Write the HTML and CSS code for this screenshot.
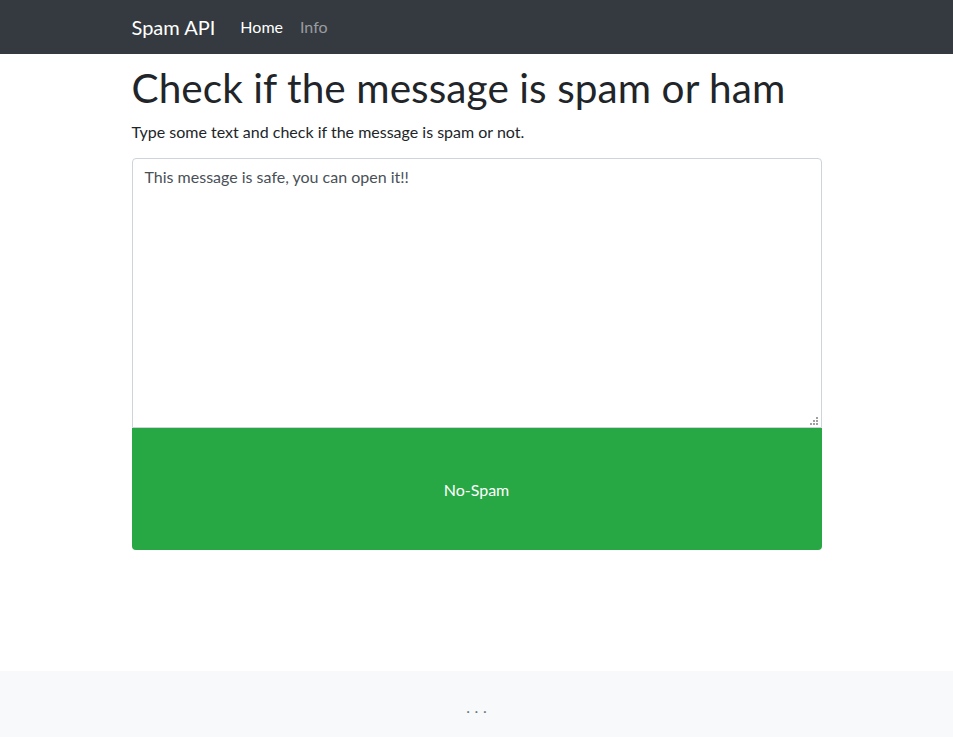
FILE: index.html
```html
<!DOCTYPE html>
<html lang="en">
<head>
<meta charset="utf-8">
<title>Spam API</title>
<link rel="stylesheet" href="styles.css">
</head>
<body>
<nav class="navbar">
  <div class="container nav-inner">
    <a class="brand" href="#">Spam API</a>
    <ul class="nav-links">
      <li><a class="nav-link active" href="#">Home</a></li>
      <li><a class="nav-link" href="#">Info</a></li>
    </ul>
  </div>
</nav>
<main class="container main">
  <h1 class="title">Check if the message is spam or ham</h1>
  <p class="lead-text">Type some text and check if the message is spam or not.</p>
  <form class="check-form">
    <div class="field">
      <textarea class="message">This message is safe, you can open it!!</textarea>
      <svg class="grip" width="8" height="8" viewBox="0 0 8 8" aria-hidden="true">
        <rect x="6" y="0" width="2" height="2"/>
        <rect x="3" y="3" width="2" height="2"/>
        <rect x="6" y="3" width="2" height="2"/>
        <rect x="0" y="6" width="2" height="2"/>
        <rect x="3" y="6" width="2" height="2"/>
        <rect x="6" y="6" width="2" height="2"/>
      </svg>
    </div>
    <button type="button" class="result-btn">No-Spam</button>
  </form>
</main>
<footer class="footer">
  <div class="container footer-inner">...</div>
</footer>
</body>
</html>
```
FILE: styles.css
```css
* { box-sizing: border-box; }
html, body { margin: 0; padding: 0; }
body {
  font-family: Lato, "Open Sans", sans-serif;
  font-size: 16px;
  line-height: 1.5;
  color: #212529;
  background: #fff;
  min-height: 737px;
  display: flex;
  flex-direction: column;
}
.container {
  width: 720px;
  margin: 0 auto;
  padding: 0 15px;
}
.navbar {
  background: #343a40;
  height: 54px;
}
.nav-inner {
  display: flex;
  align-items: center;
  height: 100%;
}
.brand {
  color: #fff;
  text-decoration: none;
  font-size: 20px;
  margin-right: 25px;
  line-height: 30px;
}
.nav-links {
  list-style: none;
  margin: 0;
  padding: 0;
  display: flex;
  gap: 17px;
}
.nav-link {
  color: rgba(255,255,255,.5);
  text-decoration: none;
  font-size: 16px;
}
.nav-link.active { color: #fff; }
.main {
  flex: 1;
  padding-top: 10px;
}
.title {
  font-size: 40.5px;
  font-weight: 400;
  line-height: 48px;
  margin: 0 0 8px;
  letter-spacing: 0.08px;
}
.lead-text {
  margin: 0 0 14px;
}
.check-form {
  display: flex;
  flex-direction: column;
}
.field {
  position: relative;
}
.message {
  display: block;
  width: 100%;
  height: 270px;
  padding: 6px 12px;
  font-family: inherit;
  font-size: 16px;
  line-height: 1.5;
  color: #495057;
  border: 1px solid #ced4da;
  border-radius: 4px 4px 0 0;
  resize: none;
  margin: 0;
}
.grip {
  position: absolute;
  right: 4px;
  bottom: 3px;
  fill: #a0a0a0;
  pointer-events: none;
}
.result-btn {
  display: block;
  width: 100%;
  height: 122px;
  background: #28a745;
  border: none;
  color: #fff;
  font-family: inherit;
  font-size: 16px;
  border-radius: 0 0 4px 4px;
  margin: 0;
  padding-top: 2px;
}
.footer {
  background: #f8f9fa;
  height: 66px;
  margin-top: 121px;
}
.footer-inner {
  text-align: center;
  color: #6c757d;
  padding-top: 24px;
  line-height: 24px;
  letter-spacing: 4.5px;
  text-indent: 4.5px;
}
```
